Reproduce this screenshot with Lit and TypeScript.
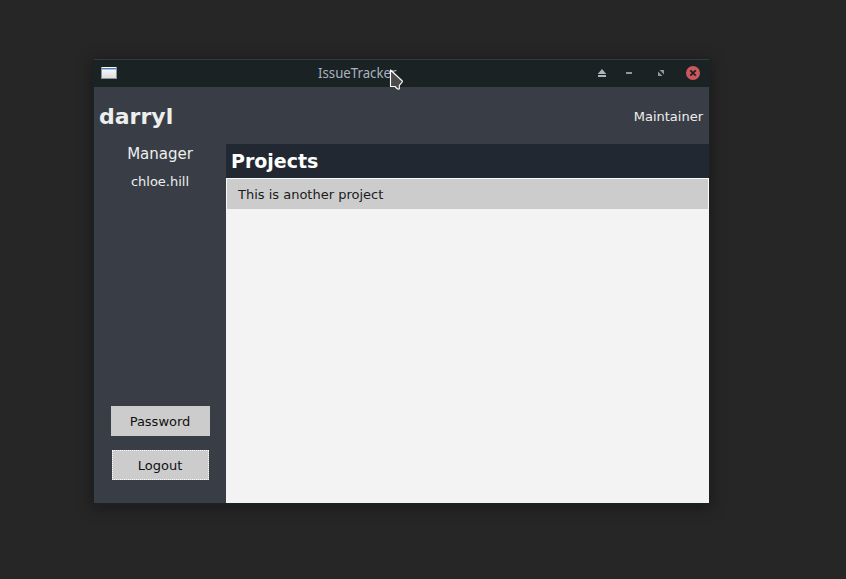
import { LitElement, html, css } from "lit";
import { customElement } from "lit/decorators.js";

@customElement("title-bar")
class TitleBar extends LitElement {
  static styles = css`
    :host {
      display: grid;
      grid-template-columns: 224px 1fr 115px;
      height: 27px;
      border-top: 1px solid #343b3b;
      background: #1b2224;
      align-items: center;
    }
    .app { display: block; margin: 0 0 1px 7px; }
    .title {
      font: 14.7px/24px "Noto Sans", sans-serif;
      color: #a9b2c0;
      white-space: nowrap;
      transform: scaleX(0.9);
      transform-origin: left;
      padding-bottom: 3px;
    }
    .controls { display: block; }
  `;
  render() {
    return html`
      <svg class="app" width="16" height="14" viewBox="0 0 16 14" shape-rendering="crispEdges">
        <defs><linearGradient id="g" x1="0" y1="0" x2="0" y2="1">
          <stop offset="0" stop-color="#fff"/><stop offset="1" stop-color="#ddd"/>
        </linearGradient></defs>
        <rect y="1" width="16" height="12" fill="#8d9290"/>
        <rect x="1" y="1" width="14" height="11" fill="url(#g)"/>
        <rect x="1" y="2" width="14" height="1" fill="#4a7dbb"/>
        <rect x="1" y="3" width="14" height="1" fill="#a9c3e2"/>
      </svg>
      <span class="title">IssueTracker</span>
      <svg class="controls" width="115" height="27" viewBox="594 60 115 27">
        <path d="M602 69L606.3 74H597.7ZM598 75h8v2h-8Z" fill="#a9b8bc"/>
        <path d="M626 72h6v2h-6Z" fill="#8d9899"/>
        <path d="M659.5 70h4.5v4.5ZM658 71.5l4.5 4.5h-4.5Z" fill="#8d9899"/>
        <circle cx="693" cy="73" r="7" fill="#cc575d"/>
        <path d="M690.3 70.3l5.4 5.4m0-5.4l-5.4 5.4" stroke="#1b2224" stroke-width="1.8"/>
      </svg>`;
  }
}

@customElement("app-root")
class AppRoot extends LitElement {
  static styles = css`
    :host {
      display: block;
      box-sizing: border-box;
      width: 846px;
      height: 579px;
      padding: 59px 0 0 94px;
      background: #262626;
      position: relative;
      overflow: hidden;
      font: 13px/16px "DejaVu Sans", sans-serif;
      color: #eee;
    }
    .window {
      width: 615px;
      height: 444px;
      display: flex;
      flex-direction: column;
      background: #393e46;
      box-shadow: 0 1px 0 1px #1b2224, 0 3px 14px 2px rgba(0, 0, 0, 0.35);
    }
    .header {
      box-sizing: border-box;
      height: 57px;
      display: flex;
      align-items: center;
      justify-content: space-between;
      padding: 2px 6px 0 5px;
    }
    .user { font-size: 22px; line-height: 28px; font-weight: bold; }
    .main { flex: 1; display: grid; grid-template-columns: 132px 1fr; }
    .side { display: flex; flex-direction: column; align-items: center; padding-bottom: 23px; }
    .role { font-size: 15px; line-height: 20px; }
    .person { margin-top: 10px; }
    .buttons { margin-top: auto; display: flex; flex-direction: column; align-items: center; gap: 14px; }
    .button {
      box-sizing: border-box;
      width: 99px;
      height: 30px;
      border: 0;
      padding: 2px 0 0;
      background: #ccc;
      color: #111;
      font: inherit;
    }
    .focused { width: 97px; border: 1px dotted #fff; }
    .content { background: #f3f3f3; color: #1b1b1b; }
    .heading {
      box-sizing: border-box;
      height: 34px;
      margin: 0;
      padding: 0 0 0 5px;
      background: #222831;
      color: #fff;
      font-size: 19px;
      line-height: 34px;
    }
    .row {
      box-sizing: border-box;
      height: 30px;
      margin: 1px 1px 0;
      padding: 1px 0 0 11px;
      line-height: 30px;
      background: #ccc;
      box-shadow: 0 0 0 1px #fafafa;
      clip-path: inset(-1px -1px 0 -1px);
    }
    .pointer { position: absolute; left: 389px; top: 68px; }
  `;
  render() {
    return html`
      <div class="window">
        <title-bar></title-bar>
        <div class="header"><span class="user">darryl</span><span>Maintainer</span></div>
        <div class="main">
          <div class="side">
            <span class="role">Manager</span>
            <span class="person">chloe.hill</span>
            <div class="buttons">
              <button class="button">Password</button>
              <button class="button focused">Logout</button>
            </div>
          </div>
          <div class="content">
            <h2 class="heading">Projects</h2>
            <div class="row">This is another project</div>
          </div>
        </div>
      </div>
      <svg class="pointer" width="16" height="24" viewBox="389 68 16 24">
        <path d="M390.5 70V86.5H395L397.5 89H399.3V85.3L402.3 82V81Z" fill="#4c4c4c" stroke="#fff" stroke-width="1.1" stroke-linejoin="round"/>
      </svg>`;
  }
}
